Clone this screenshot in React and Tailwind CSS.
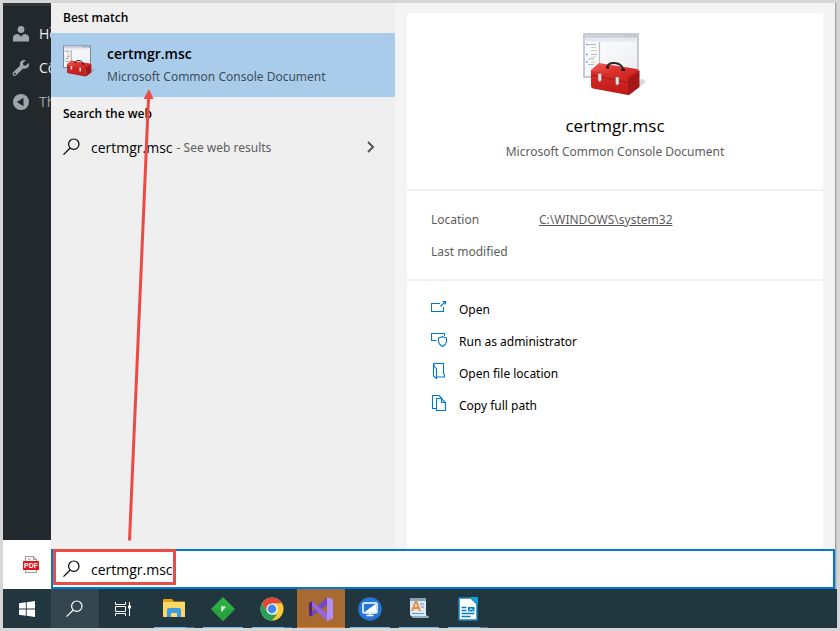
import React from 'react'

function MagnifierIcon({ className = '' }) {
  return (
    <svg viewBox="0 0 18 18" className={`size-[18px] shrink-0 ${className}`} fill="none" stroke="currentColor" strokeWidth="1.2">
      <circle cx="10.800" cy="6.200" r="5.200" />
      <path d="M7.200 10 .5 16.700" />
    </svg>
  )
}

function ToolboxIcon({ className = '', frame = '#7d8796', line = '#8b93a3' }) {
  return (
    <svg viewBox="0 0 64 64" className={className}>
      <defs>
        <linearGradient id="boxLid" x1="0" y1="0" x2="1" y2="1">
          <stop offset="0" stopColor="#f0605a" />
          <stop offset="0.5" stopColor="#dd2f2b" />
          <stop offset="1" stopColor="#c41f1d" />
        </linearGradient>
        <linearGradient id="boxFront" x1="0" y1="0" x2="0" y2="1">
          <stop offset="0" stopColor="#dc302c" />
          <stop offset="1" stopColor="#bc1918" />
        </linearGradient>
        <linearGradient id="pane" x1="0" y1="0" x2="1" y2="1">
          <stop offset="0" stopColor="#ffffff" />
          <stop offset="1" stopColor="#eceef2" />
        </linearGradient>
      </defs>
      <path d="M46 63 63 50 60 47 54 48z" fill="#000" opacity="0.15" />
      <rect x="1" y="2" width="54" height="43" fill="url(#pane)" stroke={frame} strokeWidth="1.6" />
      <rect x="1.8" y="2.8" width="52.4" height="3.4" fill="#cdd2db" />
      <path d="M41 3.5h3M46 3.5h2M50.5 3.5h2.5" stroke={frame} strokeWidth="1.6" />
      <rect x="1.8" y="6.2" width="52.4" height="3.4" fill="#e6e8ed" />
      <path d="M16.5 10v35" stroke={frame} strokeWidth="1.2" />
      <path d="M5 12.500h8M8 22.500h6M5 27h6M5 32.500h6" stroke={line} strokeWidth="1.1" />
      <path d="M8 15.500h5M8 18.500h6M8 25h5M8 30h5" stroke="#e0cf9c" strokeWidth="1.2" />
      <path d="M3 12.500h1.600M3 22.500h1.600M3 30h1.600" stroke="#5a8fe6" strokeWidth="1.500" />
      <path d="M8 38 16 31l38 6 2.500 2.500L45 48z" fill="url(#boxLid)" />
      <path d="M8 38 45 46v17L10 56.500q-2-.5-2-2.500z" fill="url(#boxFront)" />
      <path d="M45 46 56.500 38.500V55L46 63h-1z" fill="#a81717" />
      <path d="M8 43 45 50.500l11.500-7.500" stroke="#8d1010" strokeWidth="0.700" fill="none" />
      <path d="M24 35.500c1-3.500 4-5 8-4.500 5 .5 7.500 2.500 8 7" fill="none" stroke="#26282b" strokeWidth="2" />
      <path d="M23 35.500h3M38.500 38h3.500" stroke="#111" strokeWidth="2" />
      <path d="M15 41.500h3.500v6.500l-1.500 2-2-1.500z" fill="#dfe1e3" stroke="#84666a" strokeWidth="0.600" />
      <path d="M32.500 45h3.500v6.500l-1.500 2-2-1.500z" fill="#dfe1e3" stroke="#84666a" strokeWidth="0.600" />
    </svg>
  )
}

function SideItem({ label, className = 'text-[#eee]', children }) {
  return (
    <a href="#" className={`flex h-[34px] items-center gap-[9px] overflow-hidden pl-[9px] text-sm ${className}`}>
      <svg viewBox="0 0 18 18" className="size-[18px] shrink-0 fill-[#a0a5aa]">{children}</svg>
      {label}
    </a>
  )
}

function Sidebar() {
  return (
    <aside className="flex w-12 shrink-0 flex-col overflow-hidden bg-[#23282d]">
      <div className="h-[3px] bg-[#32373c]" />
      <nav className="flex-1 pt-[11px]">
        <SideItem label="Hồ">
          <circle cx="9" cy="4.500" r="3.400" />
          <path d="M1 16.500v-4C1 10.500 3 9 6 9l3 2.500L12 9c3 0 5 1.500 5 3.500v4z" />
        </SideItem>
        <SideItem label="Cô">
          <path d="M16.700 4.100 13.700 6.800 11.300 6.300 10.900 4 13.800 1.200C11.600.5 9.300 1.200 8.300 3.200c-.6 1.200-.6 2.300-.2 3.400L1.200 13.300c-.9.900-.9 2.200 0 3s2.100.8 3 0l6.900-6.800c2 .7 4.200 0 5.300-1.700.7-1.100.8-2.500.3-3.700zM2.900 15.800a1 1 0 1 1 0-2 1 1 0 0 1 0 2z" />
        </SideItem>
        <SideItem label="Th" className="text-[#a0a5aa]">
          <path fillRule="evenodd" d="M9 1a8 8 0 1 1 0 16A8 8 0 0 1 9 1zM11.500 4.800 5 9l6.500 4.200z" />
        </SideItem>
      </nav>
      <div className="flex h-[49px] items-center justify-center bg-white pl-2">
        <svg viewBox="0 0 16 17" className="h-[17px] w-4">
          <path d="M2.500 6V.5h8l3 3V6M2.500 11v5.500h11V11M10.500.5v3h3M5 3h3" fill="none" stroke="#999" />
          <rect y="5" width="16" height="9" rx="0.5" fill="#e3141b" />
          <text x="8" y="12" textAnchor="middle" className="fill-white font-['Liberation_Sans'] text-[7px] font-bold">PDF</text>
        </svg>
      </div>
    </aside>
  )
}

function Results() {
  return (
    <section className="w-[344px] shrink-0 bg-[#efefef]">
      <h2 className="flex h-[30px] items-center px-3 text-[12px] font-semibold">Best match</h2>
      <button className="flex h-16 w-full gap-3 bg-[#a9ccea] px-3 pt-2 text-left">
        <ToolboxIcon className="mt-1 size-8 shrink-0" frame="#66738a" line="#4d5668" />
        <span>
          <span className="block text-[14px] leading-[25px] font-semibold">certmgr.msc</span>
          <span className="block font-['Noto_Sans',sans-serif] text-[12px] leading-[22px] text-[#3e4e5b]">Microsoft Common Console Document</span>
        </span>
      </button>
      <h2 className="flex h-8 items-center px-3 pt-[2px] text-[12px] font-semibold">Search the web</h2>
      <button className="flex h-9 w-full items-center px-3 text-left">
        <MagnifierIcon />
        <span className="ml-[10px] text-[14px]">certmgr.msc</span>
        <span className="ml-1 pt-[2px] font-['Noto_Sans',sans-serif] text-[12px] text-[#5d5d5d]">- See web results</span>
        <svg viewBox="0 0 8 12" className="mr-2 ml-auto h-3 w-2" fill="none" stroke="#555" strokeWidth="2">
          <path d="m1 1 5 5-5 5" />
        </svg>
      </button>
    </section>
  )
}

const actions = [
  {
    label: 'Open',
    icon: <path d="M9 4.500H.5v8h12V8M9.500 7.500l5-5M11.500 2.500h3v3" />,
  },
  {
    label: 'Run as administrator',
    icon: (
      <>
        <path d="M5.500 9.500h-5v-7h13V5" />
        <path d="M11.500 5.500c1.300 1 2.600 1.400 4 1.500v3c0 2.500-1.500 4-4 5.500-2.500-1.500-4-3-4-5.500V7c1.400-.1 2.700-.5 4-1.500z" />
      </>
    ),
  },
  {
    label: 'Open file location',
    icon: <path d="M2.500.5h10v10l1 1v2.500h-8M2.500.5v12.500l3 2.500V6L3.500 3.500l-1-3" />,
  },
  {
    label: 'Copy full path',
    icon: <path d="M5 13.500H1.500V.5H8l3 3M5.500 3.500h5l4 4v8h-9zM10.500 3.500v4h4" />,
  },
]

function Preview() {
  return (
    <section className="flex flex-1 bg-[#f4f4f4] px-3 pt-[10px]">
      <div className="flex-1 bg-white font-['Noto_Sans',sans-serif] text-[12px]">
        <div className="flex h-44 flex-col items-center pt-[19px]">
          <ToolboxIcon className="size-16" frame="#b9bfca" line="#a9b8d8" />
          <h1 className="mt-4 font-['Open_Sans',sans-serif] text-[17px] leading-[28px]">certmgr.msc</h1>
          <p className="mt-px leading-[22px] text-[#5d5d5d]">Microsoft Common Console Document</p>
        </div>
        <dl className="grid grid-cols-[108px_1fr] border-y-2 border-[#f1f1f1] px-6 pt-[13px] pb-[11px] leading-8 text-[#5d5d5d]">
          <dt>Location</dt>
          <dd><a href="#" className="underline">C:\WINDOWS\system32</a></dd>
          <dt>Last modified</dt>
          <dd />
        </dl>
        <ul className="pt-3">
          {actions.map((a) => (
            <li key={a.label}>
              <button className="flex h-8 w-full items-center gap-3 px-6 pt-[2px] text-left">
                <svg viewBox="0 0 16 16" className="mb-[6px] size-4 shrink-0" fill="none" stroke="#0078d7" strokeWidth="1.1">{a.icon}</svg>
                {a.label}
              </button>
            </li>
          ))}
        </ul>
      </div>
    </section>
  )
}

function SearchPanel() {
  return (
    <main className="flex min-w-0 flex-1 flex-col">
      <div className="flex flex-1">
        <Results />
        <Preview />
      </div>
      <label className="flex h-10 items-center border-2 border-[#0078d7] bg-white pl-[10px]">
        <MagnifierIcon />
        <input aria-label="Search" defaultValue="certmgr.msc" className="ml-[10px] min-w-0 flex-1 text-[14px] outline-none" />
      </label>
    </main>
  )
}

const apps = [
  {
    name: 'File Explorer',
    line: 'multi',
    icon: (
      <>
        <path d="M1 3q0-1 1-1h8l2 2.500h10q1 0 1 1V20H1z" fill="#e5a50e" />
        <path d="M1 5h22v15H1z" fill="#ffd767" />
        <path d="M5 20v-7q0-2 2-2h10q2 0 2 2v7h-4v-4H9v4z" fill="#3d9be5" />
      </>
    ),
  },
  {
    name: 'Editor',
    line: 'single',
    icon: (
      <>
        <path d="M12 0 24 12 12 24 0 12z" fill="#2fae43" />
        <path d="M0 12h24L12 24z" fill="#27a23c" />
        <path d="M11 14.500V10h3.500M11 12h2.500" stroke="#e4f7e6" strokeWidth="1.6" fill="none" />
      </>
    ),
  },
  {
    name: 'Chrome',
    line: 'multi',
    icon: (
      <>
        <circle cx="12" cy="12" r="11.500" fill="#fcc934" />
        <path d="M2 6.300A11.500 11.500 0 0 1 22 6.300H12L7 15z" fill="#dc493c" />
        <path d="M2 6.300 7 14.900 12 17.700h5L11.800 23.500A11.500 11.500 0 0 1 2 6.300z" fill="#23a05a" />
        <circle cx="12" cy="12" r="5.600" fill="#fff" />
        <circle cx="12" cy="12" r="4.400" fill="#4285f4" />
      </>
    ),
  },
  {
    name: 'Visual Studio',
    active: true,
    icon: (
      <>
        <path d="M0 18 3 19.500 18 7.500V0L2 16z" fill="#7349c2" />
        <path d="M0 6 3 4.500 18 16.500V24L2 8z" fill="#9468df" />
        <path d="M0 6 3 4.500v15L0 18z" fill="#52218a" />
        <path d="m18 0 6 2.500v19L18 24z" fill="#b48bf2" />
      </>
    ),
  },
  {
    name: 'Remote Desktop',
    line: 'single',
    icon: (
      <>
        <circle cx="12" cy="12" r="11.800" fill="#2676d3" />
        <rect x="5" y="6" width="14" height="10" rx="1" fill="#2676d3" stroke="#fff" strokeWidth="1.500" />
        <path d="M6 15.500 17.500 7H18v8.500z" fill="#fff" />
        <path d="M12 16v2M8.500 18.500h7" stroke="#fff" strokeWidth="1.500" />
      </>
    ),
  },
  {
    name: 'Text Editor',
    line: 'single',
    icon: (
      <>
        <path d="M3 2h16v16l3 2.500H6L3 18z" fill="#dbe8f2" />
        <path d="M3 1h16v3H3z" fill="#83a4bd" />
        <path d="M4 19h18l-1 2H6z" fill="#8fb0c6" />
        <path d="m5 14 3.500-9h1L13 14M6.500 11H12" stroke="#ee8a35" strokeWidth="1.800" fill="none" />
        <path d="M13 7h4M14 10h3M5 16.500h12" stroke="#7398b4" />
      </>
    ),
  },
  {
    name: 'Writer',
    line: 'multi',
    icon: (
      <>
        <path d="M3 1h12l6 6v16H3z" fill="#fff" stroke="#0f84be" strokeWidth="1.500" />
        <path d="M14 0h8v8z" fill="#15a0dc" />
        <path d="M5.500 10.500h5M5.500 13.500h5M5.500 16.500h13M5.500 19.500h9" stroke="#087cba" strokeWidth="1.300" />
        <rect x="12" y="10" width="6.500" height="4.500" fill="#087cba" />
        <path d="M13.500 13.500 15 11.500l2 2" stroke="#fff" fill="none" />
      </>
    ),
  },
]

function Taskbar() {
  return (
    <footer className="flex h-[39px] shrink-0 bg-[#21363f] text-white">
      <button aria-label="Start" className="flex w-12 items-center justify-center">
        <svg viewBox="0 0 16 16" className="size-4 fill-white">
          <path d="M0 2.300 6.800 1.300v6.300H0zM7.700 1.200 16 0v7.600H7.700zM0 8.500h6.800v6.300L0 13.800zM7.700 8.500H16V16l-8.300-1.200z" />
        </svg>
      </button>
      <button aria-label="Search" className="flex w-12 items-center justify-center bg-[#34464f]">
        <MagnifierIcon />
      </button>
      <button aria-label="Task View" className="mr-[3px] flex w-12 items-center justify-center">
        <svg viewBox="0 0 16 16" className="size-4" fill="none" stroke="#fff">
          <path d="M.5 1v2.500h10V1M.5 15v-2.500h10V15M.5 5.500h10v5H.5zM14.500 1v14" />
          <path d="M13 4.500h3v3h-3z" fill="#fff" stroke="none" />
        </svg>
      </button>
      <div className="flex gap-px">
        {apps.map((app) => (
          <button key={app.name} aria-label={app.name} className={`flex w-12 flex-col items-center ${app.active ? 'border-b border-[#f27a24] bg-[#a76a30]' : ''}`}>
            <svg viewBox="0 0 24 24" className="mt-2 mb-[6px] size-6 shrink-0">{app.icon}</svg>
            {app.line && (
              <span className="flex h-px w-10">
                <span className="flex-1 bg-[#76b9ed]" />
                {app.line === 'multi' && <span className="w-2 bg-[#50748d]" />}
              </span>
            )}
          </button>
        ))}
      </div>
    </footer>
  )
}

export default function App() {
  return (
    <div className="relative flex h-screen flex-col bg-[#d6d6d6] p-[3px] font-['Open_Sans',sans-serif] text-black">
      <div className="flex flex-1">
        <Sidebar />
        <SearchPanel />
        <div className="w-[2px] border-l border-[#a0a0a0] bg-[#c4c4c4]" />
      </div>
      <Taskbar />

      {/* red callout: box round the query, arrow up to the best match */}
      <div className="pointer-events-none absolute bottom-[46px] left-[53px] h-9 w-[123px] border-3 border-[#ec4a45]" />
      <svg viewBox="0 0 30 452" className="pointer-events-none absolute bottom-[90px] left-[124px] h-[452px] w-[30px]">
        <path d="M5.500 451.500 24.500 9" stroke="#ec4a45" strokeWidth="3" />
        <path d="M25 0 29.500 10h-10z" fill="#ec4a45" />
      </svg>
    </div>
  )
}
